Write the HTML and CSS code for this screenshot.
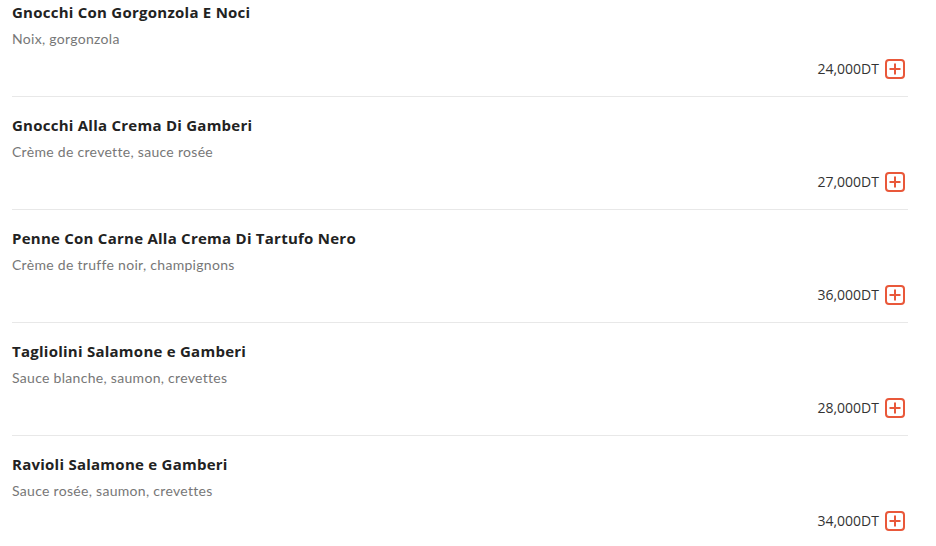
FILE: index.html
```html
<!DOCTYPE html>
<html>
	<head>
		<meta charset="utf-8">
		<title>Pâtes</title>
		<link rel="stylesheet" href="styles.css">
	</head>
	<body>
		<div class="menu-list">

			<div class="menu-item">
				<div class="item-name">Gnocchi Con Gorgonzola E Noci</div>
				<div class="item-desc">Noix, gorgonzola</div>
				<div class="item-foot">
					<span class="item-price">24,000DT</span>
					<button class="add-btn" title="Ajouter">
						<svg width="20" height="20" viewBox="0 0 20 20"><rect x="1" y="1" width="18" height="18" rx="3" /><path d="M10 4.5v11M4.5 10h11" /></svg>
					</button>
				</div>
			</div>

			<div class="menu-item">
				<div class="item-name">Gnocchi Alla Crema Di Gamberi</div>
				<div class="item-desc">Crème de crevette, sauce rosée</div>
				<div class="item-foot">
					<span class="item-price">27,000DT</span>
					<button class="add-btn" title="Ajouter">
						<svg width="20" height="20" viewBox="0 0 20 20"><rect x="1" y="1" width="18" height="18" rx="3" /><path d="M10 4.5v11M4.5 10h11" /></svg>
					</button>
				</div>
			</div>

			<div class="menu-item">
				<div class="item-name">Penne Con Carne Alla Crema Di Tartufo Nero</div>
				<div class="item-desc">Crème de truffe noir, champignons</div>
				<div class="item-foot">
					<span class="item-price">36,000DT</span>
					<button class="add-btn" title="Ajouter">
						<svg width="20" height="20" viewBox="0 0 20 20"><rect x="1" y="1" width="18" height="18" rx="3" /><path d="M10 4.5v11M4.5 10h11" /></svg>
					</button>
				</div>
			</div>

			<div class="menu-item">
				<div class="item-name">Tagliolini Salamone e Gamberi</div>
				<div class="item-desc">Sauce blanche, saumon, crevettes</div>
				<div class="item-foot">
					<span class="item-price">28,000DT</span>
					<button class="add-btn" title="Ajouter">
						<svg width="20" height="20" viewBox="0 0 20 20"><rect x="1" y="1" width="18" height="18" rx="3" /><path d="M10 4.5v11M4.5 10h11" /></svg>
					</button>
				</div>
			</div>

			<div class="menu-item">
				<div class="item-name">Ravioli Salamone e Gamberi</div>
				<div class="item-desc">Sauce rosée, saumon, crevettes</div>
				<div class="item-foot">
					<span class="item-price">34,000DT</span>
					<button class="add-btn" title="Ajouter">
						<svg width="20" height="20" viewBox="0 0 20 20"><rect x="1" y="1" width="18" height="18" rx="3" /><path d="M10 4.5v11M4.5 10h11" /></svg>
					</button>
				</div>
			</div>

		</div>
	</body>
</html>
```

FILE: styles.css
```css
html, body {
	margin: 0;
	padding: 0;
	background: #fff;
	overflow: hidden;
}

body {
	font-family: "Lato", "Noto Sans", sans-serif;
	color: #222;
}

.menu-list {
	margin: -16px 28px 0 12px;
}

.menu-item {
	padding: 18px 0 17px;
	border-bottom: 1px solid #e8e8e8;
}

.item-name {
	font-family: "Open Sans", "Noto Sans", sans-serif;
	font-size: 15px;
	font-weight: 700;
	line-height: 20px;
	letter-spacing: 0.25px;
	color: #222;
	margin-bottom: 7px;
}

.item-desc {
	font-size: 14px;
	line-height: 20px;
	letter-spacing: 0.3px;
	color: #777;
}

.item-foot {
	display: flex;
	justify-content: flex-end;
	align-items: center;
	gap: 6px;
	height: 20px;
	margin-top: 10px;
	padding-right: 3px;
}

.item-price {
	font-family: "Open Sans", "Noto Sans", sans-serif;
	font-size: 14px;
	color: #333;
	line-height: 20px;
}

.add-btn {
	display: block;
	padding: 0;
	border: none;
	background: none;
	width: 20px;
	height: 20px;
	cursor: pointer;
}

.add-btn svg {
	display: block;
	fill: none;
	stroke: #e9583a;
	stroke-width: 2;
}
```
